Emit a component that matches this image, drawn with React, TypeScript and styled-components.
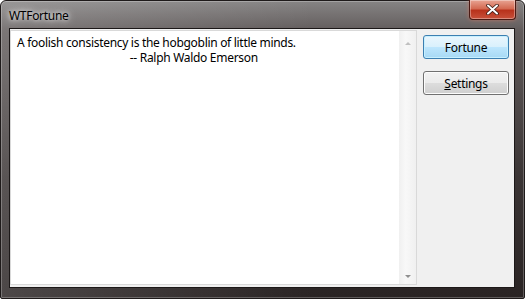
import React from "react";
import styled, { createGlobalStyle } from "styled-components";

const GlobalStyle = createGlobalStyle`
  html, body { margin: 0; padding: 0; background: #ffffff; }
  body { font-family: "Segoe UI", "Noto Sans", "Liberation Sans", sans-serif; letter-spacing: -0.3px; }
`;

const Window = styled.div`
  box-sizing: border-box;
  width: 525px;
  height: 299px;
  display: flex;
  flex-direction: column;
  padding: 0 9px 10px 8px;
  border: 1px solid #1e1a1a;
  border-radius: 6px 6px 2px 2px;
  background:
    linear-gradient(90deg, rgba(255,255,255,0.16), rgba(255,255,255,0) 60%),
    linear-gradient(180deg, #868484 0%, #625c5c 10%, #3a3434 60%, #2a2424 100%);
  box-shadow: inset 0 0 0 1px rgba(255,255,255,0.25);
`;

const TitleBar = styled.div`
  height: 27px;
  display: flex;
  align-items: flex-start;
`;

const Title = styled.span`
  font-size: 12px;
  color: #000000;
  margin-top: 6px;
  text-shadow: 0 0 8px rgba(255,255,255,0.9), 0 0 4px rgba(255,255,255,0.8);
`;

const CloseButton = styled.div`
  margin-left: auto;
  margin-right: -1px;
  margin-top: -1px;
  width: 47px;
  height: 20px;
  box-sizing: border-box;
  border: 1px solid #4a1a14;
  border-top: none;
  border-radius: 0 0 4px 4px;
  display: flex;
  align-items: center;
  justify-content: center;
  background: linear-gradient(180deg, #e8a493 0%, #d46a52 45%, #b8321c 55%, #c8503a 100%);
  box-shadow: inset 0 0 0 1px rgba(255,255,255,0.35), 0 0 4px rgba(255,120,90,0.5);
`;

const Client = styled.div`
  flex: 1;
  display: flex;
  background: #f0f0f0;
  border: 1px solid #1c1818;
  padding: 1px 0 2px 0;
`;

const TextBox = styled.div`
  box-sizing: border-box;
  width: 407px;
  display: flex;
  border: 1px solid #d9d9d9;
  background: #ffffff;
`;

const Content = styled.div`
  flex: 1;
  padding: 4px 0 0 6px;
  font-size: 12px;
  line-height: 15px;
  color: #000000;
  white-space: pre;
`;

const ScrollBar = styled.div`
  width: 17px;
  display: flex;
  flex-direction: column;
  justify-content: space-between;
  align-items: center;
  padding: 11px 0 6px;
  background: linear-gradient(90deg, #f0f0f0, #f8f8f8 40%, #f0f0f0);
`;

const Arrow = styled.div<{ $down?: boolean }>`
  width: 0;
  height: 0;
  border-left: 3px solid transparent;
  border-right: 3px solid transparent;
  ${(p) => (p.$down ? "border-top: 3px solid #8f8f8f;" : "border-bottom: 3px solid #c0c0c0;")}
`;

const Buttons = styled.div`
  display: flex;
  flex-direction: column;
  gap: 12px;
  padding: 5px 0 0 6px;
`;

const Button = styled.div<{ $default?: boolean }>`
  box-sizing: border-box;
  width: 86px;
  height: 24px;
  border-radius: 3px;
  display: flex;
  align-items: center;
  justify-content: center;
  font-size: 12px;
  color: #000000;
  border: 1px solid ${(p) => (p.$default ? "#3c7fb1" : "#707070")};
  background: ${(p) =>
    p.$default
      ? "linear-gradient(180deg, #eaf6fd 0%, #d9f0fc 50%, #bee6fd 50%, #a7d9f5 100%)"
      : "linear-gradient(180deg, #f2f2f2 0%, #ebebeb 50%, #dddddd 50%, #cfcfcf 100%)"};
  box-shadow: inset 0 0 0 1px ${(p) => (p.$default ? "#c7f0ff" : "#fcfcfc")};
`;

const AccessKey = styled.span`
  text-decoration: underline;
`;

const fortune =
  "A foolish consistency is the hobgoblin of little minds.\n" +
  " ".repeat(40) +
  "-- Ralph Waldo Emerson";

export default function App() {
  return (
    <>
      <GlobalStyle />
      <Window>
        <TitleBar>
          <Title>WTFortune</Title>
          <CloseButton>
            <svg width="13" height="11" viewBox="0 0 13 11">
              <path d="M2 1.5 L11 9.5 M11 1.5 L2 9.5" stroke="#3a1a14" strokeWidth="3.6" strokeLinecap="round" />
              <path d="M2 1.5 L11 9.5 M11 1.5 L2 9.5" stroke="#ffffff" strokeWidth="2" strokeLinecap="round" />
            </svg>
          </CloseButton>
        </TitleBar>
        <Client>
          <TextBox>
            <Content>{fortune}</Content>
            <ScrollBar>
              <Arrow />
              <Arrow $down />
            </ScrollBar>
          </TextBox>
          <Buttons>
            <Button $default>Fortune</Button>
            <Button>
              <span>
                <AccessKey>S</AccessKey>ettings
              </span>
            </Button>
          </Buttons>
        </Client>
      </Window>
    </>
  );
}
